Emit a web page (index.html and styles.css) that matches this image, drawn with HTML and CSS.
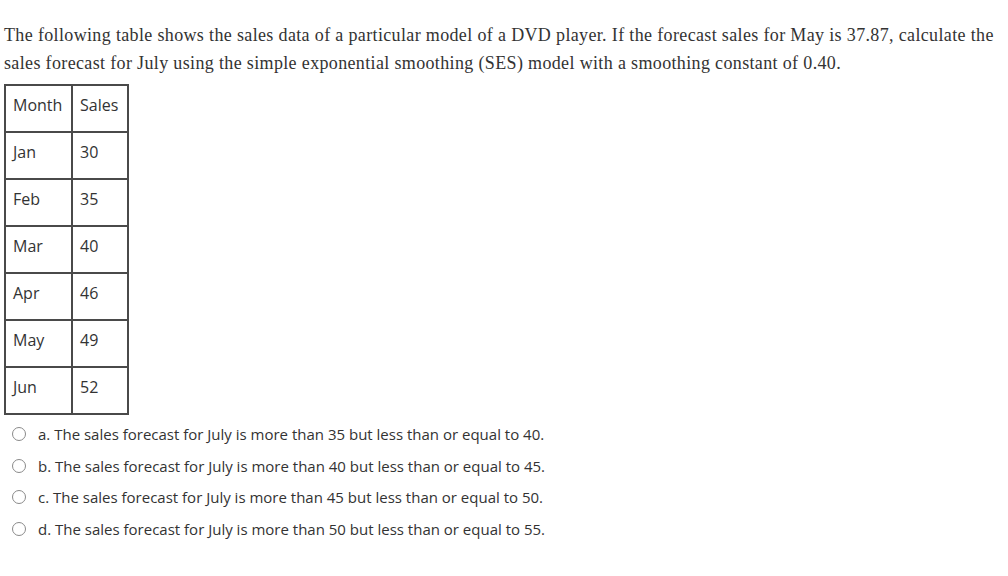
FILE: index.html
```html
<!DOCTYPE html>
<html>
<head>
<meta charset="utf-8">
<link rel="stylesheet" href="styles.css">
</head>
<body>
<div class="question">
  <p class="prompt">The following table shows the sales data of a particular model of a DVD player. If the forecast sales for May is 37.87, calculate the sales forecast for July using the simple exponential smoothing (SES) model with a smoothing constant of 0.40.</p>
  <table class="sales">
    <tr><td>Month</td><td>Sales</td></tr>
    <tr><td>Jan</td><td>30</td></tr>
    <tr><td>Feb</td><td>35</td></tr>
    <tr><td>Mar</td><td>40</td></tr>
    <tr><td>Apr</td><td>46</td></tr>
    <tr><td>May</td><td>49</td></tr>
    <tr><td>Jun</td><td>52</td></tr>
  </table>
  <ul class="answers">
    <li class="answer"><span class="radio"></span><span>a. The sales forecast for July is more than 35 but less than or equal to 40.</span></li>
    <li class="answer"><span class="radio"></span><span>b. The sales forecast for July is more than 40 but less than or equal to 45.</span></li>
    <li class="answer"><span class="radio"></span><span>c. The sales forecast for July is more than 45 but less than or equal to 50.</span></li>
    <li class="answer"><span class="radio"></span><span>d. The sales forecast for July is more than 50 but less than or equal to 55.</span></li>
  </ul>
</div>
</body>
</html>
```
FILE: styles.css
```css
html, body {
  margin: 0;
  padding: 0;
  background: #fff;
}
.question {
  padding: 21px 4px 0 4px;
  width: 1000px;
  box-sizing: border-box;
  color: #333;
}
.prompt {
  margin: 0 0 7px 0;
  font-family: "Liberation Serif", Georgia, serif;
  font-size: 18px;
  letter-spacing: 0.35px;
  line-height: 28px;
  color: #333;
}
.sales {
  border-collapse: collapse;
  font-family: "Open Sans", sans-serif;
  font-size: 16px;
  line-height: 22px;
  color: #333;
}
.sales td {
  border: 2px solid #4a4a4a;
  padding: 8px 7px 15px 7px;
  vertical-align: top;
}
.sales td:first-child {
  width: 51px;
}
.sales td:last-child {
  width: 40px;
}
.answers {
  list-style: none;
  margin: 3px 0 0 0;
  padding: 0;
  font-family: "Open Sans", sans-serif;
  font-size: 15px;
  color: #333;
}
.answer {
  display: flex;
  align-items: center;
  height: 31.8px;
}
.radio {
  width: 12px;
  height: 12px;
  border: 1.3px solid #8a8a8a;
  border-radius: 50%;
  margin: 0 12px 0 8px;
  flex: none;
}
```
